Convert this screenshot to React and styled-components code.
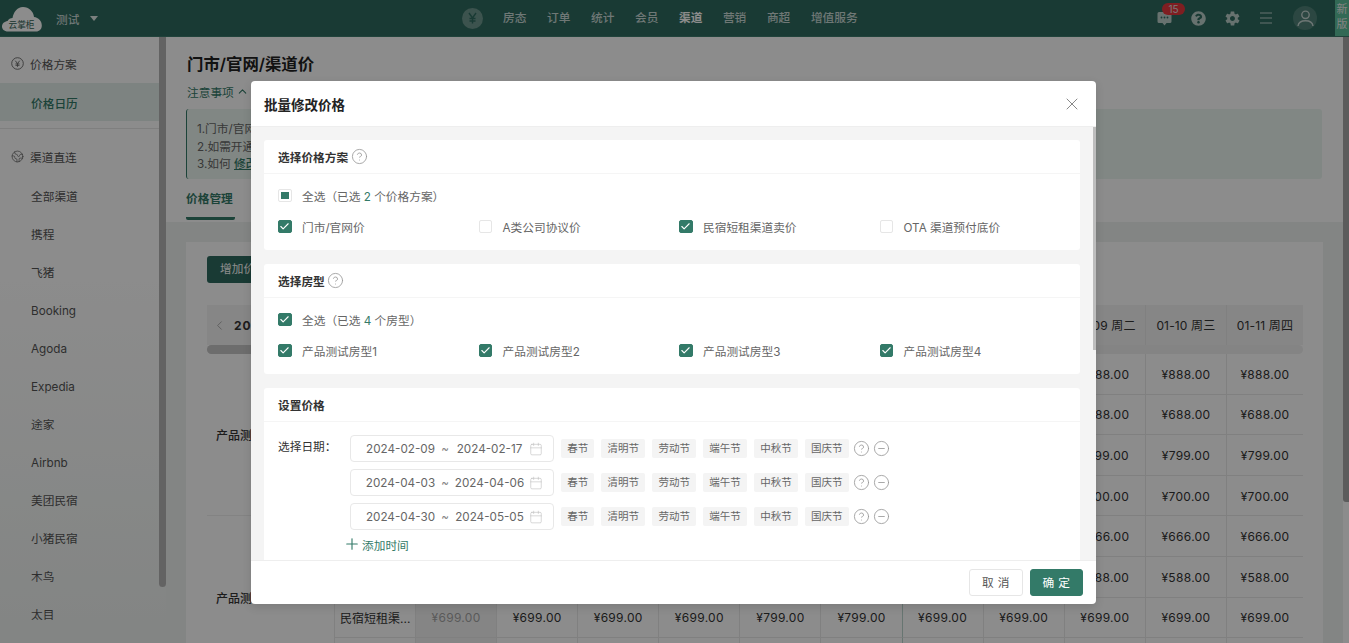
import React from "react";
import styled, { createGlobalStyle } from "styled-components";
import { Calendar, ChevronLeft, ChevronUp, CircleHelp, CircleMinus, Check, Earth, Plus, X } from "lucide-react";
import { FaQuestionCircle } from "react-icons/fa";
import { IoMdSettings } from "react-icons/io";

const GREEN = "#337a68";
const FONT = `Inter, "Noto Sans CJK SC", sans-serif`;

const Global = createGlobalStyle`
  html, body { margin: 0; padding: 0; height: 100%; overflow: hidden; background: #fff; }
  body { font-family: ${FONT}; font-size: 11.7px; color: #333; }
  * { box-sizing: border-box; }
`;

const Page = styled.div`
  position: relative;
  width: 1349px;
  height: 643px;
  overflow: hidden;
  display: flex;
  flex-direction: column;
`;
const TopBar = styled.header`
  flex: 0 0 37px;
  display: flex;
  align-items: center;
  background: #2f6b5f;
  border-bottom: 1px solid #3d7a6c;
  color: rgba(255, 255, 255, 0.85);
`;
const LogoWrap = styled.div`
  flex: 0 0 56px;
  padding-left: 1px;
  display: flex;
  align-items: center;
`;
const Hotel = styled.div`
  flex: 0 0 auto;
  display: flex;
  align-items: center;
  gap: 11px;
  width: 406px;
`;
const Caret = styled.span`
  width: 0;
  height: 0;
  border-left: 4px solid transparent;
  border-right: 4px solid transparent;
  border-top: 5px solid rgba(255, 255, 255, 0.85);
`;
const YenBadge = styled.div`
  flex: 0 0 21px;
  height: 21px;
  margin-right: 20px;
  border-radius: 50%;
  background: rgba(255, 255, 255, 0.3);
  color: #2f6b5f;
  display: flex;
  align-items: center;
  justify-content: center;
`;
const Nav = styled.nav`
  display: flex;
  gap: 20.6px;
  flex: 1;
`;
const NavItem = styled.span`
  line-height: 17px;
  font-weight: ${(p) => (p.$active ? 700 : 500)};
  color: ${(p) => (p.$active ? "#fff" : "rgba(255,255,255,.75)")};
`;
const Tools = styled.div`
  display: flex;
  align-items: center;
  height: 100%;
  color: rgba(255, 255, 255, 0.68);
`;
const ToolIcon = styled.div`
  position: relative;
  width: 34px;
  left: 1px;
  display: flex;
  justify-content: center;
`;
const Badge = styled.span`
  position: absolute;
  left: 15px;
  top: -8px;
  width: 23px;
  height: 12px;
  border-radius: 6px;
  background: #e8383d;
  color: #ddd;
  font-size: 10px;
  line-height: 12px;
  text-align: center;
`;
const Avatar = styled.div`
  width: 24px;
  height: 24px;
  margin: 0 18px 0 11px;
  border-radius: 50%;
  background: rgba(255, 255, 255, 0.16);
  display: flex;
  align-items: center;
  justify-content: center;
`;
const NewTag = styled.div`
  flex: 0 0 14px;
  height: 36px;
  padding-top: 2px;
  background: #5bc09c;
  color: #eee;
  font-size: 11px;
  line-height: 15px;
  text-align: center;
`;

const Body = styled.div`
  flex: 1;
  min-height: 0;
  display: flex;
`;
const Sidebar = styled.aside`
  position: relative;
  flex: 0 0 166px;
  padding-top: 7px;
  background: linear-gradient(#fff 40%, #eef2f0);
`;
const SideThumb = styled.div`
  position: absolute;
  top: 0;
  right: 0;
  width: 7px;
  height: 550px;
  border-radius: 0 0 4px 4px;
  background: #b5b5b5;
`;
const SideGroup = styled.div`
  height: 39px;
  padding-left: 11px;
  display: flex;
  align-items: center;
  gap: 6px;
  color: #555;
`;
const SideItem = styled.div`
  width: 159px;
  height: 38px;
  padding: 3px 0 0 31px;
  display: flex;
  align-items: center;
  line-height: 16px;
  color: ${(p) => (p.$active ? GREEN : "#555")};
  font-weight: ${(p) => (p.$active ? 500 : 400)};
  background: ${(p) => (p.$active ? "#e4efeb" : "transparent")};
`;
const SideRule = styled.div`
  width: 159px;
  height: 1px;
  margin: 7px 0 8px;
  background: #e8e8e8;
`;

const Main = styled.main`
  flex: 1;
  min-width: 0;
  display: flex;
  flex-direction: column;
  background: #eef2f0;
`;
const MainHead = styled.div`
  flex: 0 0 185px;
  padding: 15px 21px 0 20px;
  background: #fff;
`;
const PageTitle = styled.h1`
  margin: 0 0 0 1px;
  font-size: 16.4px;
  line-height: 24px;
  font-weight: 600;
  color: #222;
`;
const Notes = styled.div`
  margin: 5px 0 0 1px;
  height: 20px;
  display: flex;
  align-items: center;
  gap: 2px;
  color: ${GREEN};
`;
const NoticeBox = styled.div`
  margin-top: 8px;
  height: 70px;
  padding: 12px 10px 0;
  border-left: 1px solid ${GREEN};
  border-radius: 3px;
  background: #ecf6f1;
  line-height: 17.5px;
  color: #666;
`;
const NoticeLink = styled.span`
  color: ${GREEN};
  text-decoration: underline;
  font-weight: 500;
`;
const TabLabel = styled.div`
  display: inline-block;
  margin-top: 10px;
  width: 49px;
  height: 31px;
  font-weight: 600;
  color: ${GREEN};
  line-height: 20px;
  border-bottom: 3px solid ${GREEN};
  border-radius: 0 0 2px 2px;
`;
const TableCard = styled.section`
  margin: 20px 20px 0 20px;
  padding: 14px 20px 0 21px;
  background: #fff;
  flex: 1;
  min-height: 0;
  overflow: hidden;
`;
const AddButton = styled.div`
  width: 90px;
  height: 27px;
  margin-bottom: 22px;
  padding-left: 13px;
  border-radius: 3px;
  background: #2f6b5f;
  color: #fff;
  line-height: 27px;
`;
const Grid = styled.div`
  width: 1096px;
  display: grid;
  grid-template-columns: 127px 81px repeat(10, 81.1px) 77px;
  grid-template-rows: 40px 9px;
  grid-auto-rows: 40.6px;
  font-size: 12px;
`;
const HeadCorner = styled.div`
  grid-column: span 2;
  display: flex;
  align-items: center;
  gap: 7px;
  padding-left: 5px;
  background: #f4f4f4;
  color: #999;
`;
const CornerText = styled.b`
  color: #333;
  letter-spacing: 1px;
`;
const HeadCell = styled.div`
  padding-bottom: 1px;
  display: flex;
  align-items: center;
  justify-content: center;
  background: #f4f4f4;
  border-left: 1px solid #e9e9e9;
  white-space: nowrap;
  letter-spacing: 0.15px;
`;
const ScrollTrack = styled.div`
  grid-column: 1 / -1;
  border-radius: 5px;
  background: #f0f0f0;
`;
const ScrollThumb = styled.div`
  width: 620px;
  height: 100%;
  border-radius: 5px;
  background: #c6c6c6;
`;
const RoomCell = styled.div`
  grid-row: span 4;
  padding-left: 9px;
  display: flex;
  align-items: center;
  font-weight: 500;
  border-bottom: 1px solid #efefef;
`;
const PlanCell = styled.div`
  grid-column: 2;
  padding-left: 5px;
  display: flex;
  align-items: center;
  border-left: 1px solid #e9e9e9;
  border-bottom: 1px solid #e9e9e9;
  white-space: nowrap;
  overflow: hidden;
`;
const PriceCell = styled.div`
  padding-top: 1px;
  display: flex;
  align-items: center;
  justify-content: center;
  letter-spacing: 0.3px;
  border-bottom: 1px solid #e9e9e9;
  border-left: 1px solid ${(p) => (p.$mark ? "#bcd6ce" : "#e9e9e9")};
  background: ${(p) => (p.$past ? "#f3f3f3" : "#fff")};
  color: ${(p) => (p.$past ? "#a5a5a5" : "#333")};
`;
const MainScroll = styled.div`
  flex: 0 0 6px;
  align-self: flex-start;
  height: 465px;
  border-radius: 0 0 0 3px;
  background: #a8a8a8;
`;

const Mask = styled.div`
  position: absolute;
  inset: 0;
  background: rgba(0, 0, 0, 0.45);
`;
const Modal = styled.div`
  position: absolute;
  left: 251px;
  top: 81px;
  width: 845px;
  height: 523px;
  display: flex;
  flex-direction: column;
  border-radius: 4px;
  overflow: hidden;
  background: #fff;
  box-shadow: 0 3px 10px rgba(0, 0, 0, 0.12);
`;
const ModalHead = styled.div`
  flex: 0 0 46px;
  padding: 0 14px 0 13px;
  display: flex;
  align-items: center;
  justify-content: space-between;
  border-bottom: 1px solid #eee;
`;
const ModalTitle = styled.div`
  font-size: 13.5px;
  font-weight: 600;
  color: #222;
`;
const ModalBody = styled.div`
  position: relative;
  flex: 1;
  min-height: 0;
  overflow: hidden;
  padding: 13px 16px 0 13px;
  background: #f4f4f4;
  display: flex;
  flex-direction: column;
  gap: 14px;
`;
const BodyThumb = styled.div`
  position: absolute;
  top: 0;
  right: 0;
  width: 3px;
  height: 223px;
  background: #bdbdbd;
`;
const Card = styled.section`
  flex: 0 0 auto;
  border-radius: 3px;
  background: #fff;
`;
const CardHead = styled.div`
  height: 34px;
  padding-left: 14px;
  display: flex;
  align-items: center;
  gap: 2.5px;
  border-bottom: 1px solid #f5f5f5;
  font-weight: 600;
  color: #333;
`;
const CardBody = styled.div`
  padding: 6px 14px 8px;
`;
const CheckRow = styled.div`
  height: 31px;
  display: grid;
  grid-template-columns: repeat(4, 200.5px);
  align-items: center;
`;
const CheckItem = styled.div`
  display: flex;
  align-items: center;
  gap: 10.5px;
  color: #666;
  white-space: nowrap;
`;
const Count = styled.span`
  color: ${GREEN};
`;
const Box = styled.span`
  flex: 0 0 13.5px;
  height: 13.5px;
  display: flex;
  align-items: center;
  justify-content: center;
  border-radius: 2px;
  border: 1px solid ${(p) => (p.$state === "on" ? GREEN : "#e6e6e6")};
  background: ${(p) => (p.$state === "on" ? GREEN : "#fff")};
  color: #fff;
`;
const Dot = styled.span`
  width: 7.5px;
  height: 7.5px;
  background: ${GREEN};
`;
const DateForm = styled.div`
  padding: 13px 14px 0;
  display: grid;
  grid-template-columns: 72px 1fr;
`;
const DateLabel = styled.div`
  height: 27px;
  line-height: 25px;
  color: #333;
`;
const DateList = styled.div`
  display: flex;
  flex-direction: column;
  gap: 7px;
`;
const DateRow = styled.div`
  height: 27px;
  display: flex;
  align-items: center;
`;
const DateInput = styled.div`
  flex: 0 0 204px;
  height: 27px;
  margin-right: 7px;
  padding-left: 11px;
  display: flex;
  align-items: center;
  border: 1px solid #e8e8e8;
  border-radius: 4px;
  color: #666;
`;
const DateValue = styled.span`
  flex: 0 0 77px;
  text-align: center;
  white-space: nowrap;
`;
const Tilde = styled.span`
  flex: 0 0 12px;
  text-align: center;
  color: #888;
`;
const CalendarSlot = styled.span`
  display: flex;
  margin-left: 1px;
  color: #bbb;
`;
const Tags = styled.div`
  display: flex;
  gap: 7px;
`;
const Tag = styled.span`
  height: 19px;
  padding: 0 6.2px;
  border-radius: 2px;
  background: #f4f4f4;
  color: #666;
  font-size: 10.5px;
  line-height: 19px;
`;
const RowIcons = styled.div`
  margin-left: 4px;
  display: flex;
  gap: 3px;
  color: #999;
`;
const AddTime = styled.div`
  height: 16px;
  margin: -1px 0 20px -7px;
  display: flex;
  align-items: center;
  gap: 1px;
  color: ${GREEN};
`;
const ModalFoot = styled.div`
  flex: 0 0 44px;
  padding: 8px 13px 0 0;
  display: flex;
  justify-content: flex-end;
  gap: 7px;
  border-top: 1px solid #eee;
`;
const FootButton = styled.div`
  width: 53.5px;
  height: 27px;
  border-radius: 3px;
  border: 1px solid ${(p) => (p.$primary ? GREEN : "#e6e6e6")};
  background: ${(p) => (p.$primary ? GREEN : "#fff")};
  color: ${(p) => (p.$primary ? "#fff" : "#555")};
  letter-spacing: 4px;
  text-indent: 4px;
  line-height: 27px;
  text-align: center;
`;

const CloudLogo = () => (
  <svg width="42" height="30" viewBox="0 0 42 30">
    <path
      d="M7 28.500C3 28.500 1 26 1 23.500C1 20.500 3.500 18.500 6.500 18C7.500 16 9.500 15 11.500 15C12.500 9.500 16 4 22 4C28 4 32.500 8.500 33 14C37.500 14.500 40.800 18 40.800 22.500C40.800 26 38.500 28.500 35 28.500Z"
      fill="#fff"
    />
    <text x="20.500" y="24.800" textAnchor="middle" fontSize="8.700" fill="#2f5f55" fontFamily="Noto Sans CJK SC, sans-serif">云掌柜</text>
  </svg>
);
const YenCircle = () => (
  <svg width="13" height="13" viewBox="0 0 13 13" fill="none" stroke="#666" strokeWidth="0.9">
    <circle cx="6.500" cy="6.500" r="5.800" />
    <path d="M4.300 3.700 6.500 6.600 8.700 3.700M6.500 6.600V9.800M4.500 6.900H8.500M4.500 8.300H8.500" />
  </svg>
);
const YenGlyph = () => (
  <svg width="11" height="12" viewBox="0 0 11 12" fill="none" stroke="currentColor" strokeWidth="1.400">
    <path d="M2 1 5.500 6 9 1M5.500 6V11.500M2.500 6.500H8.500M2.500 9H8.500" />
  </svg>
);
const ChatIcon = () => (
  <svg width="15" height="15" viewBox="0 0 15 15">
    <path d="M2 1H13A1.500 1.500 0 0 1 14.500 2.500V10.500A1.500 1.500 0 0 1 13 12H9.500L7.500 14.500 5.500 12H2A1.500 1.500 0 0 1 .5 10.500V2.500A1.500 1.500 0 0 1 2 1Z" fill="currentColor" />
    <circle cx="4.500" cy="6.500" r="0.900" fill="#2f6b5f" />
    <circle cx="7.500" cy="6.500" r="0.900" fill="#2f6b5f" />
    <circle cx="10.500" cy="6.500" r="0.900" fill="#2f6b5f" />
  </svg>
);
const MenuIcon = () => (
  <svg width="14" height="12" viewBox="0 0 14 12" fill="none" stroke="currentColor" strokeWidth="1.200">
    <path d="M1 1H13M1 6H13M1 11H13" />
  </svg>
);
const UserIcon = () => (
  <svg width="17" height="18" viewBox="0 0 17 18" fill="none" stroke="currentColor" strokeWidth="1.400">
    <circle cx="8.500" cy="5.800" r="3.700" />
    <path d="M1 17C1.500 13.500 4.500 11.800 8.500 11.800S15.500 13.500 16 17" />
  </svg>
);

const CheckBox = ({ state }) => (
  <Box $state={state}>
    {state === "on" && <Check size={11} strokeWidth={2.4} />}
    {state === "half" && <Dot />}
  </Box>
);

const navItems = ["房态", "订单", "统计", "会员", "渠道", "营销", "商超", "增值服务"];
const channels = ["全部渠道", "携程", "飞猪", "Booking", "Agoda", "Expedia", "途家", "Airbnb", "美团民宿", "小猪民宿", "木鸟", "太目"];
const weekdays = ["周一", "周二", "周三", "周四", "周五", "周六", "周日", "周一", "周二", "周三", "周四"];
const dayHeads = weekdays.map((w, i) => `01-${String(i + 1).padStart(2, "0")} ${w}`);
const plans = [
  { name: "门市/官网价", state: "on" },
  { name: "A类公司协议价", state: "off" },
  { name: "民宿短租渠道卖价", state: "on" },
  { name: "OTA 渠道预付底价", state: "off" },
];
const rooms = ["产品测试房型1", "产品测试房型2", "产品测试房型3", "产品测试房型4"];
const holidays = ["春节", "清明节", "劳动节", "端午节", "中秋节", "国庆节"];
const ranges = [
  ["2024-02-09", "2024-02-17"],
  ["2024-04-03", "2024-04-06"],
  ["2024-04-30", "2024-05-05"],
];
const priceRows = [
  { room: "产品测试房型1", groups: [
    ["门市/官网价", "888.00"], ["A类公司...", "688.00"], ["民宿短租渠...", "799.00"], ["OTA 渠道...", "700.00"],
  ] },
  { room: "产品测试房型2", groups: [
    ["门市/官网价", "666.00"], ["A类公司...", "588.00"], ["民宿短租渠...", "699.00"], ["OTA 渠道...", "600.00"],
  ] },
];
const weekendPrice = (v, i) => (v === "699.00" && (i === 4 || i === 5) ? "799.00" : v);

export default function App() {
  return (
    <>
      <Global />
      <Page>
        <TopBar>
          <LogoWrap><CloudLogo /></LogoWrap>
          <Hotel>测试<Caret /></Hotel>
          <YenBadge><YenGlyph /></YenBadge>
          <Nav>
            {navItems.map((n) => <NavItem key={n} $active={n === "渠道"}>{n}</NavItem>)}
          </Nav>
          <Tools>
            <ToolIcon><ChatIcon /><Badge>15</Badge></ToolIcon>
            <ToolIcon><FaQuestionCircle size={15} /></ToolIcon>
            <ToolIcon><IoMdSettings size={17} /></ToolIcon>
            <ToolIcon><MenuIcon /></ToolIcon>
            <Avatar><UserIcon /></Avatar>
            <NewTag>新<br />版</NewTag>
          </Tools>
        </TopBar>
        <Body>
          <Sidebar>
            <SideThumb />
            <SideGroup><YenCircle />价格方案</SideGroup>
            <SideItem $active>价格日历</SideItem>
            <SideRule />
            <SideGroup><Earth size={13} strokeWidth={1.2} />渠道直连</SideGroup>
            {channels.map((c) => <SideItem key={c}>{c}</SideItem>)}
          </Sidebar>
          <Main>
            <MainHead>
              <PageTitle>门市/官网/渠道价</PageTitle>
              <Notes>注意事项 <ChevronUp size={13} /></Notes>
              <NoticeBox>
                1.门市/官网价将同步到官网<br />
                2.如需开通渠道请联系客服<br />
                3.如何 <NoticeLink>修改价格</NoticeLink>
              </NoticeBox>
              <TabLabel>价格管理</TabLabel>
            </MainHead>
            <TableCard>
              <AddButton>增加价格方案</AddButton>
              <Grid>
                <HeadCorner><ChevronLeft size={15} strokeWidth={1.2} /><CornerText>2024-01</CornerText></HeadCorner>
                {dayHeads.map((d) => <HeadCell key={d}>{d}</HeadCell>)}
                <ScrollTrack><ScrollThumb /></ScrollTrack>
                {priceRows.map((r) => (
                  <React.Fragment key={r.room}>
                    <RoomCell>{r.room}</RoomCell>
                    {r.groups.map(([plan, value]) => (
                      <React.Fragment key={plan}>
                        <PlanCell>{plan}</PlanCell>
                        {dayHeads.map((d, i) => (
                          <PriceCell key={d} $past={i === 0} $mark={i === 6}>¥{weekendPrice(value, i)}</PriceCell>
                        ))}
                      </React.Fragment>
                    ))}
                  </React.Fragment>
                ))}
              </Grid>
            </TableCard>
          </Main>
          <MainScroll />
        </Body>
        <Mask />
        <Modal>
          <ModalHead>
            <ModalTitle>批量修改价格</ModalTitle>
            <X size={20} strokeWidth={1.2} color="#888" />
          </ModalHead>
          <ModalBody>
            <BodyThumb />
            <Card>
              <CardHead>选择价格方案<CircleHelp size={17} strokeWidth={1.2} color="#999" /></CardHead>
              <CardBody>
                <CheckRow>
                  <CheckItem><CheckBox state="half" /><span>全选（已选 <Count>2</Count> 个价格方案）</span></CheckItem>
                </CheckRow>
                <CheckRow>
                  {plans.map((p) => <CheckItem key={p.name}><CheckBox state={p.state} />{p.name}</CheckItem>)}
                </CheckRow>
              </CardBody>
            </Card>
            <Card>
              <CardHead>选择房型<CircleHelp size={17} strokeWidth={1.2} color="#999" /></CardHead>
              <CardBody>
                <CheckRow>
                  <CheckItem><CheckBox state="on" /><span>全选（已选 <Count>4</Count> 个房型）</span></CheckItem>
                </CheckRow>
                <CheckRow>
                  {rooms.map((r) => <CheckItem key={r}><CheckBox state="on" />{r}</CheckItem>)}
                </CheckRow>
              </CardBody>
            </Card>
            <Card>
              <CardHead>设置价格</CardHead>
              <DateForm>
                <DateLabel>选择日期：</DateLabel>
                <DateList>
                  {ranges.map(([a, b]) => (
                    <DateRow key={a}>
                      <DateInput>
                        <DateValue>{a}</DateValue>
                        <Tilde>~</Tilde>
                        <DateValue>{b}</DateValue>
                        <CalendarSlot><Calendar size={14} strokeWidth={1} /></CalendarSlot>
                      </DateInput>
                      <Tags>{holidays.map((h) => <Tag key={h}>{h}</Tag>)}</Tags>
                      <RowIcons>
                        <CircleHelp size={17} strokeWidth={1.2} />
                        <CircleMinus size={17} strokeWidth={1.2} />
                      </RowIcons>
                    </DateRow>
                  ))}
                  <AddTime><Plus size={18} strokeWidth={1.5} />添加时间</AddTime>
                </DateList>
              </DateForm>
            </Card>
          </ModalBody>
          <ModalFoot>
            <FootButton>取消</FootButton>
            <FootButton $primary>确定</FootButton>
          </ModalFoot>
        </Modal>
      </Page>
    </>
  );
}
